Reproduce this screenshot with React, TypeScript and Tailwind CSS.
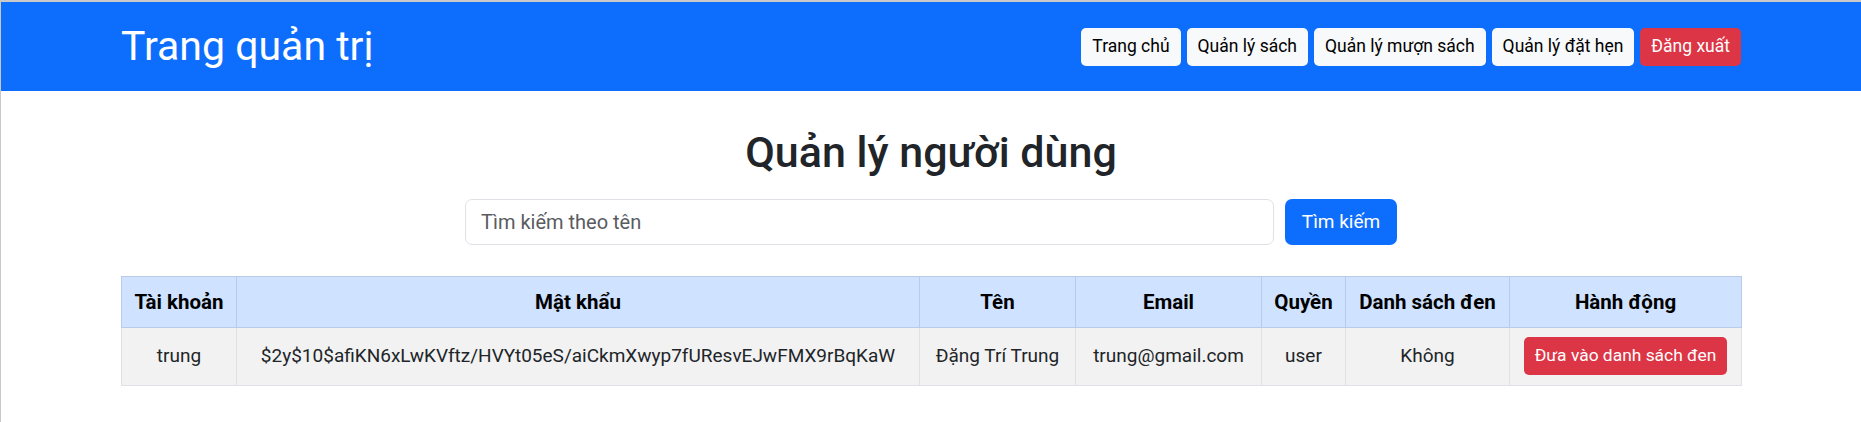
const NAV_LINKS = ["Trang chủ", "Quản lý sách", "Quản lý mượn sách", "Quản lý đặt hẹn"];

const COLUMNS = [
  { label: "Tài khoản", width: "w-[115px]" },
  { label: "Mật khẩu", width: "w-[683px]" },
  { label: "Tên", width: "w-[156px]" },
  { label: "Email", width: "w-[186px]" },
  { label: "Quyền", width: "w-[84px]" },
  { label: "Danh sách đen", width: "w-[164px]" },
  { label: "Hành động", width: "w-[232px]" },
];

type User = {
  username: string;
  password: string;
  name: string;
  email: string;
  role: string;
  blacklisted: boolean;
};

const USERS: User[] = [
  {
    username: "trung",
    password: "$2y$10$afiKN6xLwKVftz/HVYt05eS/aiCkmXwyp7fUResvEJwFMX9rBqKaW",
    name: "Đặng Trí Trung",
    email: "trung@gmail.com",
    role: "user",
    blacklisted: false,
  },
];

const Navbar = () => (
  <nav className="h-[89px] bg-[#0d6efd]">
    <div className="mx-auto flex h-full w-[1620px] items-center justify-between">
      <a href="#" className="text-[41px] leading-none text-white">
        Trang quản trị
      </a>
      <div className="flex items-center gap-[6px]">
        {NAV_LINKS.map((label) => (
          <button
            key={label}
            type="button"
            className="h-[38px] rounded-[5px] bg-[#f8f9fa] px-[11px] text-[17.5px] text-black"
          >
            {label}
          </button>
        ))}
        <button type="button" className="h-[38px] rounded-[5px] bg-[#dc3545] px-[11px] text-[17.5px] text-white">
          Đăng xuất
        </button>
      </div>
    </div>
  </nav>
);

const UserTable = ({ users }: { users: User[] }) => (
  <table className="w-full table-fixed border-collapse text-center text-[19px] text-[#212529]">
    <colgroup>
      {COLUMNS.map((c) => (
        <col key={c.label} className={c.width} />
      ))}
    </colgroup>
    <thead>
      <tr className="bg-[#cfe2ff]">
        {COLUMNS.map((c) => (
          <th
            key={c.label}
            className="border border-[#b9cbe8] px-[8px] py-[10.5px] text-[20.5px] font-bold leading-[28.5px] text-black"
          >
            {c.label}
          </th>
        ))}
      </tr>
    </thead>
    <tbody>
      {users.map((u) => (
        <tr key={u.username} className="bg-[#f2f2f2]">
          <td className="border border-[#dee2e6] px-[9px] py-[9.5px] align-middle">{u.username}</td>
          <td className="border border-[#dee2e6] px-[9px] py-[9.5px] align-middle">{u.password}</td>
          <td className="border border-[#dee2e6] px-[9px] py-[9.5px] align-middle">{u.name}</td>
          <td className="border border-[#dee2e6] px-[9px] py-[9.5px] align-middle">{u.email}</td>
          <td className="border border-[#dee2e6] px-[9px] py-[9.5px] align-middle">{u.role}</td>
          <td className="border border-[#dee2e6] px-[9px] py-[9.5px] align-middle">{u.blacklisted ? "Có" : "Không"}</td>
          <td className="border border-[#dee2e6] px-[9px] py-[9.5px] align-middle">
            <button type="button" className="h-[38px] rounded-[5px] bg-[#dc3545] px-[11px] text-[17.4px] leading-none text-white">
              Đưa vào danh sách đen
            </button>
          </td>
        </tr>
      ))}
    </tbody>
  </table>
);

export default function App() {
  return (
    <div className="min-h-[422px] border-l border-t-2 border-[#c9c9c9] bg-white font-['Roboto','Noto_Sans',sans-serif]">
      <Navbar />
      <main className="mx-auto w-[1620px]">
        <h1 className="mt-[35px] text-center text-[43px] font-medium leading-[52px] text-[#212529]">Quản lý người dùng</h1>
        <form className="mt-[21px] flex justify-center gap-[11px]" onSubmit={(e) => e.preventDefault()}>
          <input
            type="text"
            placeholder="Tìm kiếm theo tên"
            className="h-[46px] w-[809px] rounded-[7px] border border-[#dee2e6] px-[15px] text-[20px] text-[#212529] outline-none placeholder:text-[#595c5f]"
          />
          <button type="submit" className="h-[46px] w-[112px] rounded-[7px] bg-[#0d6efd] text-[19px] text-white">
            Tìm kiếm
          </button>
        </form>
        <div className="mt-[31px]">
          <UserTable users={USERS} />
        </div>
      </main>
    </div>
  );
}
